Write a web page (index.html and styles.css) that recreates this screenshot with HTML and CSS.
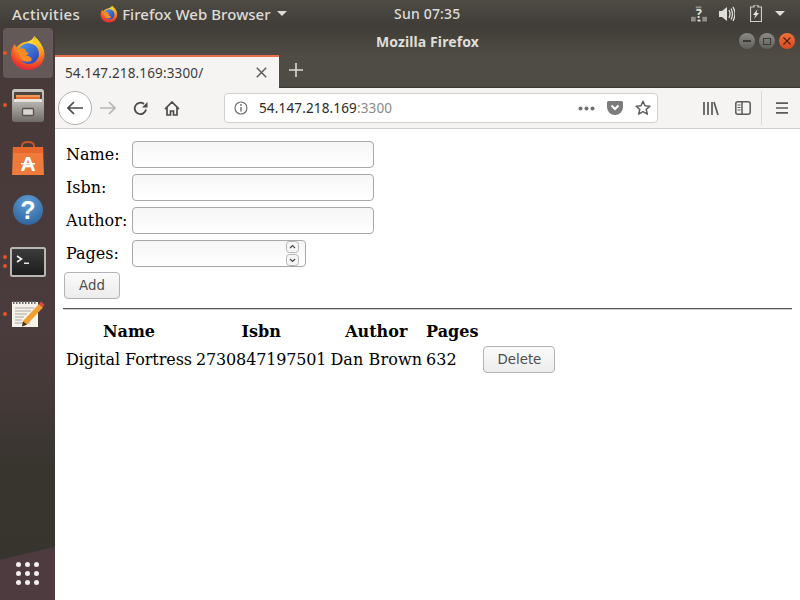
FILE: index.html
```html
<!DOCTYPE html>
<html lang="en">
<head>
<meta charset="utf-8">
<title>Mozilla Firefox</title>
<link rel="stylesheet" href="styles.css">
</head>
<body>
<svg class="defs" width="0" height="0" aria-hidden="true">
  <defs>
    <radialGradient id="fxo" cx="0.6" cy="0.15" r="0.95">
      <stop offset="0" stop-color="#ffe03a"/><stop offset="0.45" stop-color="#ff9a1e"/><stop offset="0.8" stop-color="#ee3a2c"/><stop offset="1" stop-color="#c81e5c"/>
    </radialGradient>
    <linearGradient id="fxb" x1="0" y1="0" x2="1" y2="1">
      <stop offset="0" stop-color="#4a9df0"/><stop offset="1" stop-color="#2a3fb4"/>
    </linearGradient>
    <symbol id="firefox" viewBox="0 0 36 36">
      <path d="M24 1c1 3 0 5-1 6C27 7 35 11 34.500 20 34 29 27 35 18 35 8 35 1 28 1 19 1 15 3 11 5 9c0 2 1 3 2 3 2-3 6-5 9-5 3-1 7-2 8-6z" fill="url(#fxo)"/>
      <path d="M8 15c3-5 9-8 14-6 4 1 7 5 7 10 0 6-5 10-10 10-4 0-7-2-8-4 3 2 8 2 9-1 1-2-1-3-3-3l-3-1c0-2 2-2 3-3l-3-1-1-2c-2 0-4 1-5 1z" fill="url(#fxb)"/>
      <path d="M24 1c4 3 9 9 10 16-2-4-5-8-9-9-2-1-3-1-3-1 2-1 3-3 2-6z" fill="#ffc922"/>
      <path d="M10 13l5 1 1 3 3 1-3 3 4 1c2 1 2 3 1 4-2 1-6 1-9-1-2-3-4-8-2-12z" fill="#ff8a1f"/>
    </symbol>
  </defs>
</svg>

<header class="topbar">
  <span class="activities">Activities</span>
  <span class="appmenu">
    <svg class="appicon" width="18" height="18"><use href="#firefox"/></svg>
    <span>Firefox Web Browser</span>
    <i class="caret"></i>
  </span>
  <span class="clock">Sun 07:35</span>
  <span class="tray">
    <svg width="16" height="17" viewBox="0 0 17 17"><g fill="#8f8d88"><rect x="5" y="1" width="6" height="2"/><rect x="0" y="12" width="5" height="5"/><rect x="12" y="12" width="5" height="5"/></g><text x="8.500" y="13" class="traytext">?</text><rect x="7" y="15" width="3" height="2" fill="#e8e6e0"/></svg>
    <svg width="16" height="16" viewBox="0 0 16 16"><path d="M0 5h3l5-4v14l-5-4H0z" fill="#dfddd8"/><path d="M10 4q2 4 0 8M12 2.500q3 5.500 0 11M14 1q4 7 0 14" fill="none" stroke="#dfddd8" stroke-width="1.300"/></svg>
    <svg class="batt" width="12" height="17" viewBox="0 0 12 17"><path d="M4 0h4v2h3.500v14.500H.5V2H4z" fill="none" stroke="#cfcdc8" stroke-width="1.200"/><path d="M7.500 4L3 10h2.500L4 14l5-6H6.500z" fill="#e8e6e0"/></svg>
    <i class="caret"></i>
  </span>
</header>

<div class="desktop">
  <nav class="dock">
    <div class="dock-item active"><i class="pip"></i>
      <svg width="36" height="36"><use href="#firefox"/></svg>
    </div>
    <div class="dock-item"><i class="pip"></i>
      <svg width="34" height="35" viewBox="0 0 34 35">
        <defs><linearGradient id="cab" x1="0" y1="0" x2="0" y2="1"><stop offset="0" stop-color="#c9c6c0"/><stop offset="0.45" stop-color="#b0ada8"/><stop offset="1" stop-color="#6f6c68"/></linearGradient></defs>
        <rect x="1" y="1" width="32" height="33" rx="3" fill="url(#cab)"/>
        <rect x="3" y="4" width="28" height="10" rx="1" fill="#4d4540"/>
        <rect x="5" y="7" width="24" height="2" fill="#f09a5a"/>
        <rect x="5" y="9" width="24" height="2" fill="#e8692c"/>
        <rect x="3" y="11" width="28" height="3" fill="#e4e2dc"/>
        <rect x="11.500" y="20.500" width="11" height="7" rx="1" fill="#d8d6d0" stroke="#55524e" stroke-width="1.300"/>
      </svg>
    </div>
    <div class="dock-item">
      <svg width="34" height="34" viewBox="0 0 34 34">
        <path d="M11 8V5q0-4 6-4t6 4v3" fill="none" stroke="#c8552a" stroke-width="2"/>
        <path d="M2 6h30l1 28H1z" fill="#ee7a3c"/>
        <path d="M2 6h30l.3 6H1.700z" fill="#e8672c"/>
        <text x="17" y="30" class="ubuntu-a">A</text>
        <rect x="10" y="22" width="14" height="1.500" fill="#fff"/>
      </svg>
    </div>
    <div class="dock-item">
      <svg width="32" height="32" viewBox="0 0 32 32">
        <defs><radialGradient id="help" cx="0.5" cy="0.25" r="0.85"><stop offset="0" stop-color="#5e9ed6"/><stop offset="1" stop-color="#2a5e98"/></radialGradient></defs>
        <circle cx="16" cy="16" r="15" fill="url(#help)"/>
        <text x="16" y="25" class="helpmark">?</text>
      </svg>
    </div>
    <div class="dock-item"><i class="pip two"></i>
      <svg width="36" height="30" viewBox="0 0 36 30">
        <defs><linearGradient id="term" x1="0" y1="0" x2="0" y2="1"><stop offset="0" stop-color="#3c3c3c"/><stop offset="1" stop-color="#1c1c1c"/></linearGradient></defs>
        <rect x="1" y="1" width="34" height="28" rx="1.500" fill="url(#term)" stroke="#b9b7b2" stroke-width="2"/>
        <path d="M7 9l4.500 3L7 15" fill="none" stroke="#f0f0f0" stroke-width="1.600"/>
        <rect x="14" y="15.500" width="5" height="1.500" fill="#e8e8e8"/>
      </svg>
    </div>
    <div class="dock-item"><i class="pip"></i>
      <svg width="34" height="28" viewBox="0 0 34 28">
        <rect x="1" y="2" width="26" height="25" fill="#f4f2ea"/>
        <path d="M2 2.500h24" stroke="#6a6a6a" stroke-width="3" stroke-dasharray="1.500 1.500"/>
        <path d="M4 8h19M4 11h16M4 14h12M4 17h9M4 20h7M4 23h15" stroke="#aaa89f" stroke-width="1"/>
        <path d="M12 21L28 4l4 3.500L16 24.500l-5 2z" fill="#f0a030"/>
        <path d="M28 4l2-2.500 3.500 3-2 3z" fill="#d84a3a"/>
        <path d="M11 26.500l1-5 4 3z" fill="#3a3028"/>
      </svg>
    </div>
    <div class="apps">
      <i></i><i></i><i></i><i></i><i></i><i></i><i></i><i></i><i></i>
    </div>
  </nav>

  <div class="window">
    <div class="titlebar">
      <span class="wintitle">Mozilla Firefox</span>
      <span class="winbtns">
        <i class="wb"><b class="min"></b></i>
        <i class="wb"><b class="max"></b></i>
        <i class="wb close"><svg width="8" height="8" viewBox="0 0 8 8"><path d="M0.500 0.500l7 7M7.500 0.500l-7 7" stroke="#5a2010" stroke-width="1.200"/></svg></i>
      </span>
    </div>
    <div class="tabbar">
      <div class="tab">
        <span class="tab-title">54.147.218.169:3300/</span>
        <svg width="11" height="11" viewBox="0 0 11 11"><path d="M.8.8l9.400 9.400M10.200.8L.8 10.200" stroke="#5b5b5b" stroke-width="1.500"/></svg>
      </div>
      <svg class="newtab" width="14" height="14" viewBox="0 0 14 14"><path d="M7 0v14M0 7h14" stroke="#dcdad5" stroke-width="1.600"/></svg>
    </div>
    <div class="navbar">
      <span class="backbtn">
        <svg width="16" height="14" viewBox="0 0 16 14"><path d="M7 1L1 7l6 6M1 7h15" fill="none" stroke="#4a4a4a" stroke-width="1.700"/></svg>
      </span>
      <svg class="forward" width="16" height="14" viewBox="0 0 16 14"><path d="M9 1l6 6-6 6M15 7H0" fill="none" stroke="#b5b5b5" stroke-width="1.700"/></svg>
      <svg class="reload" width="15" height="15" viewBox="0 0 15 15"><path d="M13 8.500A5.700 5.700 0 1 1 11 3" fill="none" stroke="#4a4a4a" stroke-width="1.800"/><path d="M14.500 1v5.500H9z" fill="#4a4a4a"/></svg>
      <svg class="home" width="16" height="15" viewBox="0 0 16 15"><path d="M1 8l7-7 7 7M3 6.500V14h3.500v-4h3v4H13V6.500" fill="none" stroke="#4a4a4a" stroke-width="1.700"/></svg>
      <div class="urlbar">
        <svg class="info" width="14" height="14" viewBox="0 0 14 14"><circle cx="7" cy="7" r="6" fill="none" stroke="#6a6a6a" stroke-width="1.100"/><path d="M7 6v4.500" stroke="#6a6a6a" stroke-width="1.400"/><circle cx="7" cy="4" r="0.900" fill="#6a6a6a"/></svg>
        <span class="url">54.147.218.169<span class="port">:3300</span></span>
        <span class="url-actions">
          <svg width="17" height="5" viewBox="0 0 17 5"><circle cx="2.500" cy="2.500" r="2" fill="#707070"/><circle cx="8.500" cy="2.500" r="2" fill="#707070"/><circle cx="14.500" cy="2.500" r="2" fill="#707070"/></svg>
          <svg width="16" height="14" viewBox="0 0 16 14"><path d="M1.500 0h13A1.500 1.500 0 0 1 16 1.500V6a8 8 0 0 1-16 0V1.500A1.500 1.500 0 0 1 1.500 0z" fill="#7c7c7c"/><path d="M4.500 4.500L8 8l3.500-3.500" fill="none" stroke="#fff" stroke-width="2"/></svg>
          <svg width="16" height="16" viewBox="0 0 16 16"><path d="M8 1.200l2 4.500 4.900.5-3.700 3.200 1.100 4.800L8 11.700l-4.300 2.500 1.100-4.800L1.100 6.200 6 5.700z" fill="none" stroke="#5e5e5e" stroke-width="1.500" stroke-linejoin="round"/></svg>
        </span>
      </div>
      <span class="tools">
        <svg width="16" height="15" viewBox="0 0 16 15"><path d="M1 1v13M5 1v13M9 1v13M11 1l4 13" fill="none" stroke="#5a5a5a" stroke-width="1.700"/></svg>
        <svg width="16" height="14" viewBox="0 0 16 14"><rect x=".8" y=".8" width="14.400" height="12.400" rx="2" fill="none" stroke="#5a5a5a" stroke-width="1.500"/><path d="M7 1v12" stroke="#5a5a5a" stroke-width="1.500"/><path d="M2.500 4h3M2.500 6.500h3M2.500 9h3" stroke="#5a5a5a"/></svg>
        <i class="divider"></i>
        <svg width="12" height="12" viewBox="0 0 12 12"><path d="M0 1.200h12M0 6h12M0 10.800h12" stroke="#5a5a5a" stroke-width="1.700"/></svg>
      </span>
    </div>

    <main class="page">
      <form class="book-form">
        <label class="field"><span class="lbl">Name:</span><input class="txt" type="text"></label>
        <label class="field"><span class="lbl">Isbn:</span><input class="txt" type="text"></label>
        <label class="field"><span class="lbl">Author:</span><input class="txt" type="text"></label>
        <label class="field"><span class="lbl">Pages:</span>
          <span class="numwrap">
            <input class="txt num" type="text">
            <span class="spin">
              <svg width="13" height="12" viewBox="0 0 13 12"><rect x=".5" y=".5" width="12" height="11" rx="3" fill="#f6f6f6" stroke="#b5b5b5"/><path d="M4 7l2.500-2.500L9 7" fill="none" stroke="#444" stroke-width="1.100"/></svg>
              <svg width="13" height="12" viewBox="0 0 13 12"><rect x=".5" y=".5" width="12" height="11" rx="3" fill="#f6f6f6" stroke="#b5b5b5"/><path d="M4 5l2.500 2.500L9 5" fill="none" stroke="#444" stroke-width="1.100"/></svg>
            </span>
          </span>
        </label>
        <button class="btn add" type="button">Add</button>
      </form>
      <hr class="rule">
      <table class="books">
        <thead>
          <tr><th>Name</th><th>Isbn</th><th>Author</th><th>Pages</th><th></th></tr>
        </thead>
        <tbody>
          <tr><td class="c1">Digital Fortress</td><td class="c2">2730847197501</td><td class="c3">Dan Brown</td><td>632</td><td><button class="btn del" type="button">Delete</button></td></tr>
        </tbody>
      </table>
    </main>
  </div>
</div>
</body>
</html>
```

FILE: styles.css
```css
* { box-sizing: border-box; }
html, body { margin: 0; height: 100%; }
body {
  width: 800px; height: 600px; overflow: hidden;
  display: flex; flex-direction: column;
  background: #fff;
  font-family: "DejaVu Serif", serif;
  font-size: 16px; color: #000;
}
.defs { position: absolute; }
i { display: block; font-style: normal; }

/* top bar */
.topbar {
  height: 27px; flex: none;
  display: flex; align-items: center;
  padding-left: 12px;
  background: linear-gradient(#4f4c46, #3f3c37);
  color: #dedcd7;
  font-family: "Noto Sans", sans-serif;
  font-size: 15px; font-weight: 500;
  position: relative;
}
.activities { margin-right: 20px; letter-spacing: .35px; }
.appmenu { display: flex; align-items: center; gap: 5px; letter-spacing: .05px; }
.appicon { flex: none; margin-right: -1px; }
.caret { width: 0; height: 0; border: 5px solid transparent; border-top-color: #dedcd7; border-bottom-width: 0; margin-left: 1px; }
.clock { position: absolute; left: 394px; font-size: 14px; letter-spacing: .2px; }
.tray { margin-left: auto; display: flex; align-items: center; gap: 12px; padding-right: 15px; }
.batt { margin-left: 3px; }
.traytext { font: 700 13px "Noto Sans", sans-serif; fill: #e8e6e0; text-anchor: middle; }

.desktop { flex: 1; display: flex; min-height: 0; }

/* dock */
.dock {
  width: 55px; flex: none; position: relative;
  display: flex; flex-direction: column; align-items: center;
  padding-top: 1px;
  background:
    linear-gradient(166.7deg, transparent 0 518px, #4e3b40 519px),
    linear-gradient(#463a38 0, #4a3b3c 300px, #463a39 360px, #38352f 440px, #37342e 100%);
}
.dock-item {
  width: 50px; height: 50px; margin-bottom: 2.300px; flex: none;
  display: flex; align-items: center; justify-content: center;
  position: relative; border-radius: 4px;
}
.dock-item.active { background: rgba(255,255,255,.16); }
.pip { position: absolute; left: 0; top: 23px; width: 4px; height: 4px; border-radius: 50%; background: #e95420; }
.pip.two { top: 18px; box-shadow: 0 9px 0 #e95420; }
.ubuntu-a { font: 700 21px "Liberation Sans", sans-serif; fill: #fff; text-anchor: middle; }
.helpmark { font: 700 25px "Liberation Sans", sans-serif; fill: #fff; text-anchor: middle; }
.apps {
  position: absolute; left: 16px; top: 535px;
  display: grid; grid-template-columns: repeat(3, 5px); gap: 4px;
}
.apps i { width: 5px; height: 5px; border-radius: 50%; background: #f2f0ee; }

/* window */
.window { flex: 1; display: flex; flex-direction: column; min-width: 0; }
.titlebar {
  height: 28px; flex: none; position: relative;
  background: linear-gradient(#403d38, #4f4c45);
  display: flex; align-items: center; justify-content: center;
}
.wintitle { color: #dfddd8; font: 700 14px "Noto Sans", sans-serif; letter-spacing: .1px; }
.winbtns { position: absolute; right: 5px; top: 6px; display: flex; gap: 4px; }
.wb { width: 16px; height: 16px; border-radius: 50%; background: linear-gradient(#8b8984, #62605a); display: flex; align-items: center; justify-content: center; }
.wb.close { background: linear-gradient(#f0703a, #d84a1c); }
.min { width: 8px; height: 1.500px; background: #3d3b37; }
.max { width: 8px; height: 7px; border: 1px solid #3d3b37; }

.tabbar { height: 33px; flex: none; background: #4f4c45; display: flex; align-items: flex-end; border-bottom: 1px solid #3a3833; }
.tab {
  width: 224px; height: 33px; margin-bottom: -1px;
  background: #f5f4f3;
  border-top: 2px solid #e96f4a;
  display: flex; align-items: center; justify-content: space-between;
  padding: 0 12px 0 10px;
}
.tab-title { font: 13.500px "Noto Sans", sans-serif; color: #3c3c3c; letter-spacing: .15px; }
.newtab { margin: 0 0 10px 10px; }

.navbar {
  height: 41px; flex: none;
  background: #f5f4f3; border-bottom: 1px solid #cfcfcf;
  display: flex; align-items: center;
  padding-left: 3px;
}
.backbtn { width: 34px; height: 34px; border-radius: 50%; background: #fff; border: 1px solid #b0b0b0; display: flex; align-items: center; justify-content: center; flex: none; }
.forward { margin-left: 8px; flex: none; }
.reload { margin-left: 17px; flex: none; }
.home { margin-left: 16px; flex: none; }
.urlbar {
  margin-left: 44px; width: 434px; height: 30px; flex: none;
  background: #fff; border: 1px solid #cfcfcf; border-radius: 4px;
  display: flex; align-items: center; padding: 0 6px 0 9px;
}
.url { margin-left: 11px; font: 13.500px "Noto Sans", sans-serif; color: #2b2b2b; letter-spacing: .15px; }
.port { color: #8a8a8a; }
.url-actions { margin-left: auto; display: flex; align-items: center; gap: 12px; }
.tools { margin-left: 45px; display: flex; align-items: center; gap: 16px; }
.divider { width: 1px; height: 34px; background: #d8d8d8; margin: 0 -2px 0 -6px; }

/* page */
.page { flex: 1; background: #fff; padding: 12px 8px 0; }
.book-form { display: flex; flex-direction: column; align-items: flex-start; }
.field { display: flex; align-items: center; height: 27px; margin: 0 0 6px 3px; }
.lbl { width: 66px; flex: none; }
.txt {
  width: 242px; height: 27px; padding: 0 6px;
  border: 1px solid #a8a8a8; border-radius: 4px;
  background: linear-gradient(#f6f6f6, #fff);
  outline: none;
  font: 13.333px "DejaVu Sans", sans-serif;
}
.numwrap { position: relative; display: block; width: 174px; height: 27px; }
.num { width: 174px; }
.spin { position: absolute; right: 7px; top: 1px; display: flex; flex-direction: column; gap: 1px; }
.spin svg { display: block; }
.btn {
  border: 1px solid #b3b3b3; border-radius: 4px;
  background: linear-gradient(#fbfbfb, #ececec);
  color: #4d4d4d;
  font: 13.333px "DejaVu Sans", sans-serif;
  height: 27px; padding: 0;
}
.add { width: 56px; margin-left: 1px; margin-top: -1px; }
.del { width: 72px; display: block; margin-left: 1px; }
.rule { margin: 9px 0 0; border: 0; border-top: 1px solid #5a5a5a; border-bottom: 1px solid #cfcfcf; height: 2px; }
.books { border-collapse: separate; border-spacing: 2px; margin-top: 9px; }
.books th, .books td { padding: 1px; text-align: left; white-space: nowrap; font-size: 16px; }
.books th { text-align: center; font-weight: 700; padding-bottom: 2px; }
.books .c1 { letter-spacing: -.06px; }
.books .c2 { letter-spacing: -.15px; }
.books .c3 { letter-spacing: .1px; }
```
